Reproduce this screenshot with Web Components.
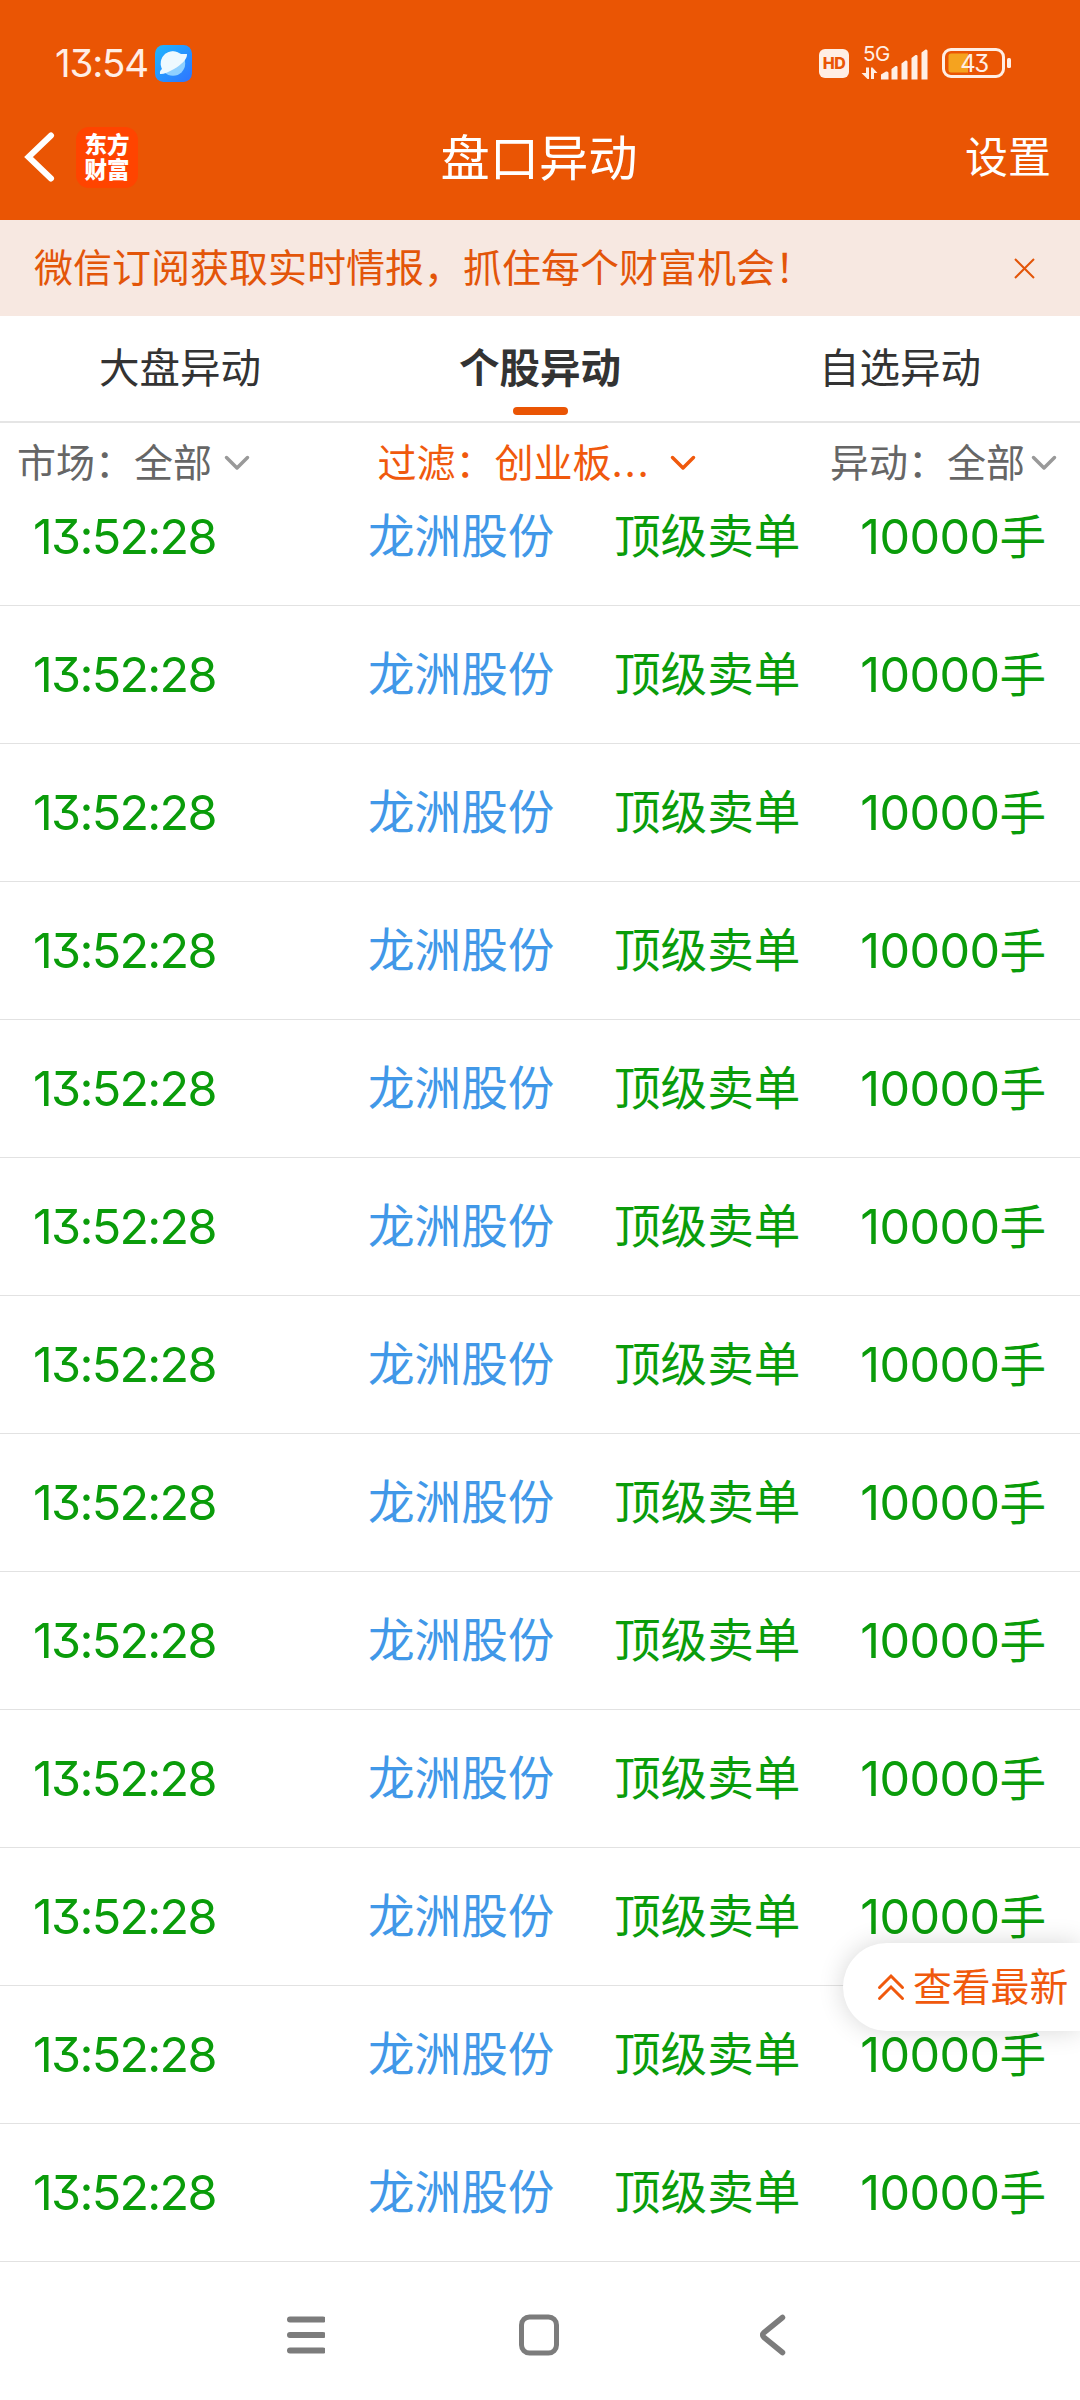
<!DOCTYPE html>
<html lang="zh-CN">
<head>
<meta charset="utf-8">
<title>盘口异动</title>
<style>
body {
    margin: 0;
    width: 1080px;
    height: 2400px;
    overflow: hidden;
    background: #fff;
    font-family: Inter, "Noto Sans CJK SC", sans-serif;
    font-feature-settings: "cv09";
}
</style>
</head>
<body>
<stock-app></stock-app>

<script>
// attach an open shadow root filled from a template string
class BaseElement extends HTMLElement {
  constructor() {
    super();
    const template = document.createElement("template");
    template.innerHTML = this.constructor.html;
    this.attachShadow({ mode: "open" });
    this.shadowRoot.appendChild(template.content.cloneNode(true));
  }
}

class StatusBar extends BaseElement {
  static html = `
<style>
:host {
    display: flex;
    align-items: center;
    height: 94px;
    padding: 32px 68px 0 55px;
    box-sizing: border-box;
    color: #ffeee5;
}
.time {
    font-size: 38.5px;
    line-height: 46px;
    letter-spacing: -1.2px;
    width: 100px;
}
svg { display: block; }
.right {
    display: flex;
    align-items: center;
    margin-left: auto;
}
.hd {
    width: 30px;
    height: 29px;
    border-radius: 6px;
    background: #ffeee5;
    color: #ea5504;
    font-size: 16px;
    font-weight: 800;
    line-height: 29px;
    text-align: center;
    letter-spacing: -0.5px;
}
.signal {
    position: relative;
    width: 68px;
    height: 34px;
    margin-left: 12px;
}
.signal span {
    position: absolute;
    left: 2px;
    top: -3px;
    font-size: 20.5px;
    line-height: 22px;
    letter-spacing: -0.5px;
}
.battery {
    position: relative;
    width: 70px;
    height: 30px;
    margin-left: 13px;
}
.battery span {
    position: absolute;
    left: 0;
    top: 0;
    width: 64px;
    font-size: 24px;
    line-height: 31px;
    text-align: center;
    letter-spacing: -1.5px;
}
</style>
<div class="time">13:54</div>
<svg width="37" height="37" viewBox="0 0 37 37">
  <defs>
    <linearGradient id="sky" x1="0" y1="0" x2="1" y2="1">
      <stop offset="0" stop-color="#1fb6ff"/>
      <stop offset="1" stop-color="#2f73ff"/>
    </linearGradient>
  </defs>
  <rect width="37" height="37" rx="8.5" fill="url(#sky)"/>
  <circle cx="18" cy="18.500" r="12.200" fill="#8fd0ff"/>
  <path d="M5 29C4.500 26 6 25 7 24A12.200 12.200 0 0 1 25.500 8.900L32 9C32.500 14 26 20 19 24C13 27.500 8 29.500 5 29Z" fill="#eef9ff"/>
</svg>
<div class="right">
  <div class="hd">HD</div>
  <div class="signal">
    <svg width="68" height="34" viewBox="0 0 68 34" fill="#ffeee5">
      <path d="M5 21.500h3v11.500h-1.500L0.500 27H5zM10 21.500h1.500L16.500 27H13v6h-3z"/>
      <path d="M20 28.500L25 25.500Q27.500 25 27.500 27V33.500H20zM30.500 23L34.500 20Q36.500 19.500 36.500 21V33.500H30.500zM40.500 17.500L44.500 14.500Q46.500 14 46.500 16V33.500H40.500zM50.500 12L54.500 9Q56.500 8.500 56.500 10V33.500H50.500zM60.500 6.500L64.500 3.500Q66.500 3 66.500 5V33.500H60.500z"/>
    </svg>
    <span>5G</span>
  </div>
  <div class="battery">
    <svg width="70" height="30" viewBox="0 0 70 30">
      <rect x="1.500" y="1.500" width="60" height="27" rx="7.500" fill="none" stroke="#ffeee5" stroke-width="3"/>
      <path d="M9 5.500H26V24.500H9Q6.500 24.500 6.500 22V8Q6.500 5.500 9 5.500Z" fill="#f5a31f"/>
      <rect x="65" y="10" width="4" height="10" rx="1.500" fill="#ffeee5"/>
    </svg>
    <span>43</span>
  </div>
</div>
`;
}

class TitleBar extends BaseElement {
  static html = `
<style>
:host {
    display: grid;
    grid-template-columns: 1fr auto 1fr;
    align-items: center;
    height: 126px;
    padding: 0 29px 0 24px;
    box-sizing: border-box;
    color: #fff;
}
.left {
    display: flex;
    align-items: center;
    gap: 21px;
}
svg { display: block; }
.logo {
    width: 62px;
    height: 61px;
    padding-top: 5px;
    box-sizing: border-box;
    border-radius: 13px;
    background: #ff4400;
    font-size: 22.5px;
    font-weight: 900;
    line-height: 25px;
    text-align: center;
}
.title {
    font-size: 49.3px;
    line-height: 60px;
    padding: 2px 0 0 3px;
}
.setting {
    font-size: 43px;
    line-height: 56px;
    text-align: right;
}
</style>
<div class="left">
  <svg width="31" height="52" viewBox="0 0 31 52" fill="none" stroke="#fff" stroke-width="6" stroke-linecap="round">
    <path d="M27 4.500L4.500 26L27 47.500"/>
  </svg>
  <div class="logo">东方<br>财富</div>
</div>
<div class="title"><slot></slot></div>
<div class="setting">设置</div>
`;
}

class NoticeBar extends BaseElement {
  static html = `
<style>
:host {
    display: flex;
    align-items: center;
    justify-content: space-between;
    height: 96px;
    padding: 0 45px 0 34px;
    background: #f7e8e1;
    color: #e35509;
    font-size: 39px;
    line-height: 50px;
}
</style>
<span><slot></slot></span>
<svg width="21" height="21" viewBox="0 0 21 21" fill="none" stroke="currentColor" stroke-width="2">
  <path d="M1 1L20 20M20 1L1 20"/>
</svg>
`;
}

class TabItem extends BaseElement {
  static html = `
<style>
:host {
    display: flex;
    flex: 1;
    flex-direction: column;
    align-items: center;
    padding-top: 27px;
    color: #333;
    font-size: 40.5px;
    line-height: 52px;
}
:host([active]) { font-weight: 700; }
.line {
    display: none;
    width: 55px;
    height: 8px;
    margin-top: 12px;
    border-radius: 4px;
    background: #ea5504;
}
:host([active]) .line { display: block; }
</style>
<slot></slot>
<div class="line"></div>
`;
}

class TabBar extends BaseElement {
  static html = `
<style>
:host {
    display: flex;
    height: 107px;
    box-sizing: border-box;
    border-bottom: 2px solid #e5e5e5;
}
</style>
<slot></slot>
`;
}

class FilterItem extends BaseElement {
  static html = `
<style>
:host {
    display: flex;
    align-items: center;
    color: #666;
    font-size: 39px;
    line-height: 50px;
    --arrow: #999;
}
:host([active]) {
    color: #f0590d;
    --arrow: #f0590d;
}
svg { margin-left: var(--arrow-gap, 12px); }
</style>
<slot></slot>
<svg width="26" height="16" viewBox="0 0 26 16" fill="none" stroke="var(--arrow)" stroke-width="3.500" stroke-linecap="round" stroke-linejoin="round">
  <path d="M2.500 2.500L13 13L23.500 2.500"/>
</svg>
`;
}

class FilterBar extends BaseElement {
  static html = `
<style>
:host {
    display: flex;
    justify-content: space-between;
    height: 80px;
    padding: 0 23px 0 17px;
}
</style>
<slot></slot>
`;
}

class StockRow extends BaseElement {
  static html = `
<style>
:host {
    display: grid;
    grid-template-columns: 335px 246px 1fr auto;
    align-items: center;
    height: 138px;
    padding: 0 34px 0 33px;
    box-sizing: border-box;
    border-bottom: 1px solid #e2e2e2;
    color: #0a9c0a;
    font-size: 46.6px;
    line-height: 60px;
}
.time { font-size: 48.5px; letter-spacing: -1.7px; }
.name, .type { padding-bottom: 2px; }
.name { color: #4198e8; }
.num { font-size: 48.5px; letter-spacing: -0.6px; }
</style>
<span class="time"></span>
<span class="name"></span>
<span class="type"></span>
<span><span class="num"></span>手</span>
`;

  connectedCallback() {
    for (const key of ["time", "name", "type", "num"]) {
      this.shadowRoot.querySelector("." + key).textContent = this.getAttribute(key);
    }
  }
}

class StockList extends BaseElement {
  static html = `
<style>
:host {
    display: block;
    height: 1760px;
    overflow: hidden;
}
/* list is scrolled a little under the filter bar */
.rows { margin-top: -35px; }
</style>
<div class="rows"></div>
`;

  connectedCallback() {
    const rows = this.shadowRoot.querySelector(".rows");
    for (let i = 0; i < 13; i++) {
      const row = document.createElement("stock-row");
      row.setAttribute("time", "13:52:28");
      row.setAttribute("name", "龙洲股份");
      row.setAttribute("type", "顶级卖单");
      row.setAttribute("num", "10000");
      rows.appendChild(row);
    }
  }
}

class LatestButton extends BaseElement {
  static html = `
<style>
:host {
    position: absolute;
    top: 1943px;
    right: 0;
    display: flex;
    align-items: center;
    gap: 8px;
    width: 237px;
    height: 88px;
    padding-left: 34px;
    box-sizing: border-box;
    border-radius: 44px 0 0 44px;
    background: #fff;
    box-shadow: 0 0 26px rgba(0, 0, 0, 0.16);
    color: #f0590d;
    font-size: 38.8px;
    line-height: 50px;
    white-space: nowrap;
}
</style>
<svg width="28" height="28" viewBox="0 0 28 28" fill="none" stroke="currentColor" stroke-width="3" stroke-linecap="round">
  <path d="M2.500 14.500L14 3L25.500 14.500M2.500 25.500L14 14L25.500 25.500"/>
</svg>
<slot></slot>
`;
}

class NavBar extends BaseElement {
  static html = `
<style>
:host {
    display: grid;
    grid-template-columns: 233px 241px 27px;
    align-items: center;
    height: 138px;
    padding: 6px 0 0 285px;
    box-sizing: border-box;
}
</style>
<svg width="40" height="42" viewBox="0 0 40 42" stroke="#7c7c7c" stroke-width="6" stroke-linecap="round">
  <path d="M5 5.500H38M5 21H38M5 36.500H38"/>
</svg>
<svg width="42" height="42" viewBox="0 0 42 42" fill="none" stroke="#7c7c7c" stroke-width="5">
  <rect x="3.500" y="3" width="35" height="36" rx="8"/>
</svg>
<svg width="27" height="42" viewBox="0 0 27 42" fill="none" stroke="#7c7c7c" stroke-width="5.500" stroke-linecap="round">
  <path d="M23.500 3.500L5 18.500Q2.300 21 5 23.500L23.500 38.500"/>
</svg>
`;
}

class StockApp extends BaseElement {
  static html = `
<style>
:host {
    position: relative;
    display: block;
    height: 2400px;
    overflow: hidden;
}
header { background: #ea5504; }
.mid { --arrow-gap: 19px; padding-right: 7px; }
.last { --arrow-gap: 6px; }
.dots { letter-spacing: 1.8px; }
</style>
<header>
  <status-bar></status-bar>
  <title-bar>盘口异动</title-bar>
</header>
<notice-bar>微信订阅获取实时情报，抓住每个财富机会！</notice-bar>
<tab-bar>
  <tab-item>大盘异动</tab-item>
  <tab-item active>个股异动</tab-item>
  <tab-item>自选异动</tab-item>
</tab-bar>
<filter-bar>
  <filter-item>市场：全部</filter-item>
  <filter-item class="mid" active>过滤：创业板<span class="dots">...</span></filter-item>
  <filter-item class="last">异动：全部</filter-item>
</filter-bar>
<stock-list></stock-list>
<nav-bar></nav-bar>
<latest-button>查看最新</latest-button>
`;
}

customElements.define("status-bar", StatusBar);
customElements.define("title-bar", TitleBar);
customElements.define("notice-bar", NoticeBar);
customElements.define("tab-item", TabItem);
customElements.define("tab-bar", TabBar);
customElements.define("filter-item", FilterItem);
customElements.define("filter-bar", FilterBar);
customElements.define("stock-row", StockRow);
customElements.define("stock-list", StockList);
customElements.define("latest-button", LatestButton);
customElements.define("nav-bar", NavBar);
customElements.define("stock-app", StockApp);
</script>
</body>
</html>
